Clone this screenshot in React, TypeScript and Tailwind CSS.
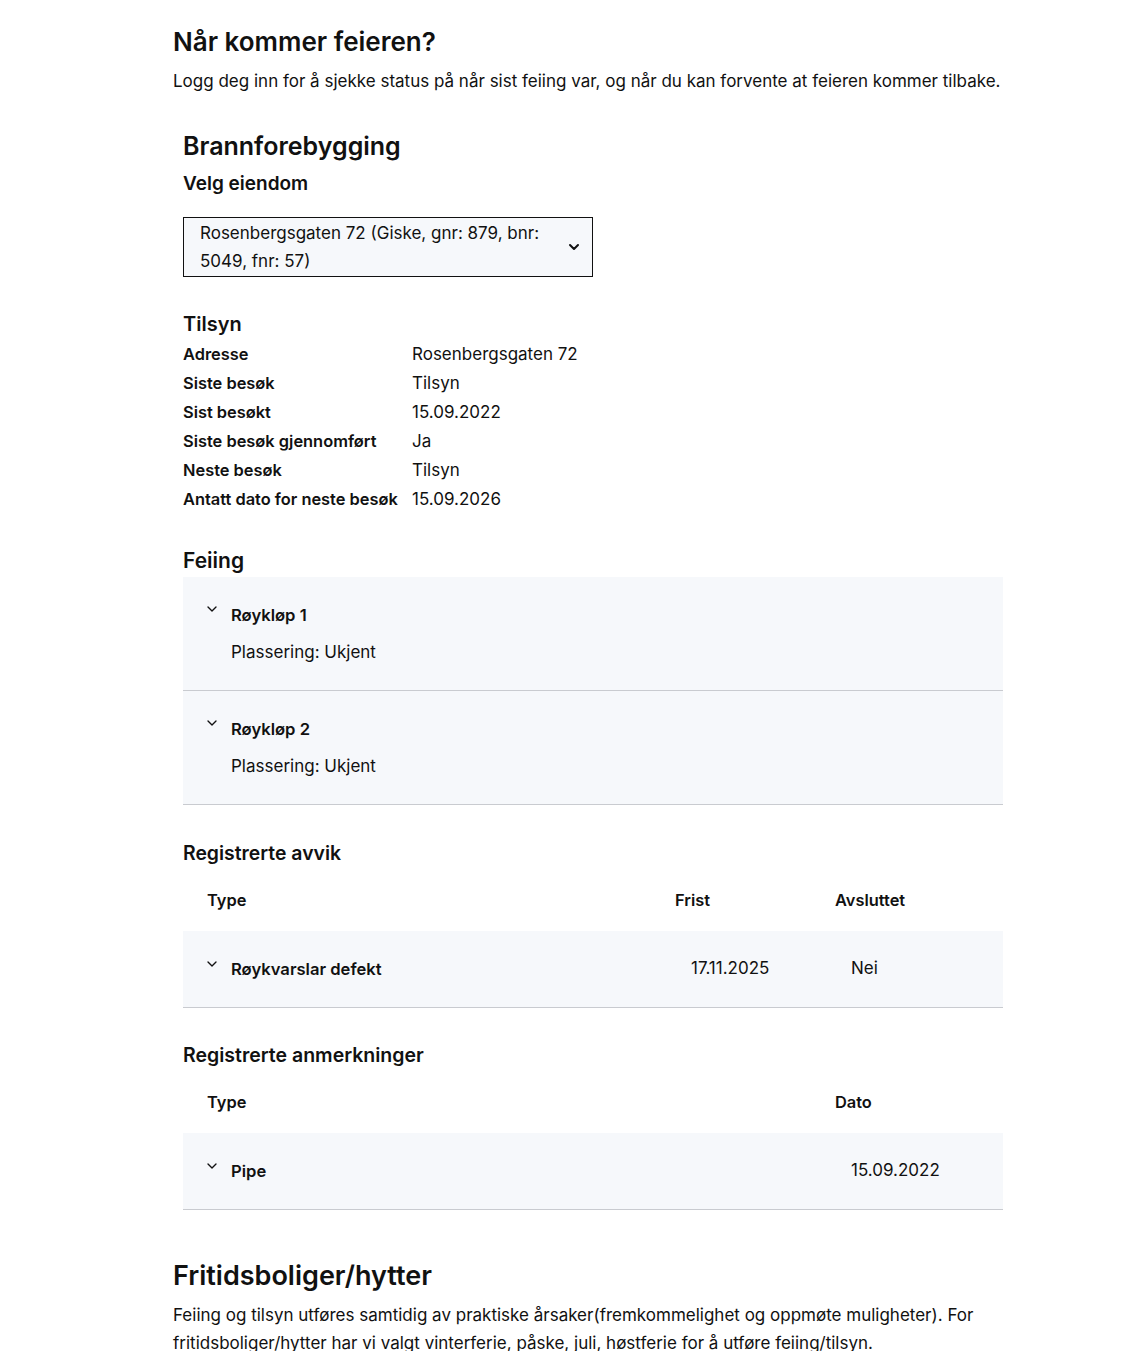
import { ChevronDown } from "lucide-react";

const tilsynRows = [
  ["Adresse", "Rosenbergsgaten 72"],
  ["Siste besøk", "Tilsyn"],
  ["Sist besøkt", "15.09.2022"],
  ["Siste besøk gjennomført", "Ja"],
  ["Neste besøk", "Tilsyn"],
  ["Antatt dato for neste besøk", "15.09.2026"],
];

const Chevron = () => (
  <ChevronDown className="w-[16px] h-[16px] text-[#111] shrink-0" strokeWidth={2} />
);

const RoykLop = ({ title }: { title: string }) => (
  <div className="bg-[#f6f8fb] border-b border-[#c9cbd0] pl-[21px] pt-[22px] pb-[25px]">
    <div className="flex flex-row items-start gap-[11px]">
      <div className="pt-[2px]">
        <Chevron />
      </div>
      <div className="flex flex-col">
        <p className="text-[16.6px] font-semibold leading-[24px] mt-[4px]">{title}</p>
        <p className="text-[17px] leading-[26px] mt-[12px]">Plassering: Ukjent</p>
      </div>
    </div>
  </div>
);

const App = () => {
  return (
    <div className="w-full bg-white text-[#111] font-['Inter',sans-serif] pb-[10px]">
      <div className="ml-[173px] w-[836px] pt-[24px]">
        <h1 className="text-[26px] font-semibold leading-[36px]">Når kommer feieren?</h1>
        <p className="text-[17px] leading-[28px] mt-[7px]">
          Logg deg inn for å sjekke status på når sist feiing var, og når du kan forvente at feieren kommer tilbake.
        </p>

        <div className="px-[10px] mt-[32px]">
          <h2 className="text-[25px] font-semibold leading-[38px]">Brannforebygging</h2>
          <h3 className="text-[19px] font-semibold leading-[30px] mt-[4px]">Velg eiendom</h3>

          <div className="mt-[18px] w-[410px] h-[60px] border border-[#111] bg-[#f6f8fb] flex flex-row items-center justify-between pl-[16px] pr-[10px]">
            <p className="text-[17px] leading-[28px]">Rosenbergsgaten 72 (Giske, gnr: 879, bnr: 5049, fnr: 57)</p>
            <ChevronDown className="w-[16px] h-[16px] shrink-0 ml-[20px]" strokeWidth={3} />
          </div>

          <h3 className="text-[20px] font-semibold leading-[30px] mt-[32px]">Tilsyn</h3>
          <div className="grid grid-cols-[229px_1fr] mt-[1px]">
            {tilsynRows.map(([label, value]) => (
              <div key={label} className="contents">
                <p className="text-[16.4px] font-semibold leading-[29px]">{label}</p>
                <p className="text-[17px] leading-[29px]">{value}</p>
              </div>
            ))}
          </div>

          <h3 className="text-[21px] font-semibold leading-[30px] mt-[32px]">Feiing</h3>
          <div className="mt-[1px] w-[820px]">
            <RoykLop title="Røykløp 1" />
            <RoykLop title="Røykløp 2" />
          </div>

          <h3 className="text-[19.4px] font-semibold leading-[30px] mt-[33px]">Registrerte avvik</h3>
          <div className="w-[820px] mt-[16px]">
            <div className="grid grid-cols-[468px_160px_1fr] pl-[24px] h-[32px] items-center">
              <p className="text-[16.4px] font-semibold">Type</p>
              <p className="text-[16.4px] font-semibold">Frist</p>
              <p className="text-[16.4px] font-semibold">Avsluttet</p>
            </div>
            <div className="mt-[15px] bg-[#f6f8fb] border-b border-[#c9cbd0] h-[77px] grid grid-cols-[487px_160px_1fr] pl-[21px] items-center">
              <div className="flex flex-row items-center gap-[11px]">
                <div className="-mt-[10px]">
                  <Chevron />
                </div>
                <p className="text-[16.6px] font-semibold">Røykvarslar defekt</p>
              </div>
              <p className="text-[17px]">17.11.2025</p>
              <p className="text-[17px]">Nei</p>
            </div>
          </div>

          <h3 className="text-[19.5px] font-semibold leading-[30px] mt-[32px]">Registrerte anmerkninger</h3>
          <div className="w-[820px] mt-[16px]">
            <div className="grid grid-cols-[628px_1fr] pl-[24px] h-[32px] items-center">
              <p className="text-[16.4px] font-semibold">Type</p>
              <p className="text-[16.4px] font-semibold">Dato</p>
            </div>
            <div className="mt-[15px] bg-[#f6f8fb] border-b border-[#c9cbd0] h-[77px] grid grid-cols-[647px_1fr] pl-[21px] items-center">
              <div className="flex flex-row items-center gap-[11px]">
                <div className="-mt-[10px]">
                  <Chevron />
                </div>
                <p className="text-[16.6px] font-semibold">Pipe</p>
              </div>
              <p className="text-[17px]">15.09.2022</p>
            </div>
          </div>
        </div>

        <h2 className="text-[27px] font-semibold leading-[38px] mt-[47px]">Fritidsboliger/hytter</h2>
        <p className="text-[17px] leading-[28px] mt-[6px]">
          Feiing og tilsyn utføres samtidig av praktiske årsaker(fremkommelighet og oppmøte muligheter). For fritidsboliger/hytter har vi valgt vinterferie, påske, juli, høstferie for å utføre feiing/tilsyn.
        </p>
      </div>
    </div>
  );
};

export default App;
